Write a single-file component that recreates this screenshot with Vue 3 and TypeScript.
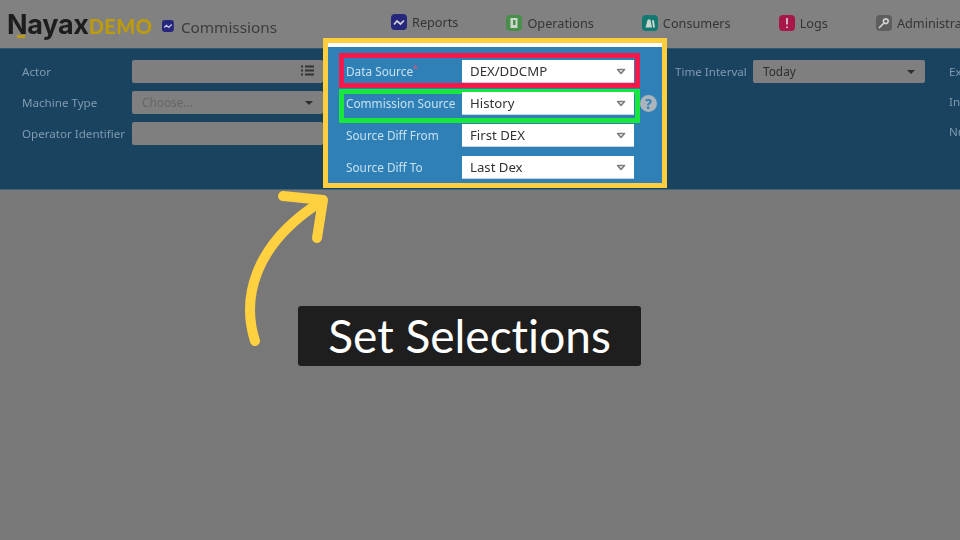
<script setup lang="ts">
interface NavItem {
  label: string;
  color: string;
  glyph: string;
  solid?: boolean;
  raised?: boolean;
}

const navItems: NavItem[] = [
  { label: 'Reports', color: '#26267c', glyph: 'M3 10.5 L6 7 L9.5 10 L13 6.5', raised: true },
  { label: 'Operations', color: '#478f4b', glyph: 'M4.5 3 H11.5 V13 H4.5 Z M7 5 V10 H9.5 V5 Z', solid: true },
  { label: 'Consumers', color: '#127a70', glyph: 'M3.5 12.5 L5.5 5 Q7 3.5 8.5 5 L10 12.5 Z M10 5.5 Q11.5 4.5 12 6 L13 12.5 H11 Z', solid: true },
  { label: 'Logs', color: '#a8174a', glyph: 'M8 3 V9.5 M8 11.5 V13' },
  { label: 'Administration', color: '#5e5e5e', glyph: 'M3 13 L8 8 M9.8 3.8 A2.4 2.4 0 1 1 9.79 3.8' },
];

const panelRows = [
  { label: 'Data Source', value: 'DEX/DDCMP', frame: 'red', required: true },
  { label: 'Commission Source', value: 'History', frame: 'green', help: true },
  { label: 'Source Diff From', value: 'First DEX' },
  { label: 'Source Diff To', value: 'Last Dex' },
];
</script>

<template>
  <div class="page">
    <div class="dimmed">
      <header class="header">
        <div class="logo">
          <span class="logo__name">Nayax</span>
          <span class="logo__mark"></span>
          <span class="logo__demo">DEMO</span>
        </div>
        <div class="title">
          <svg class="title__icon" viewBox="0 0 16 16">
            <rect width="16" height="16" rx="4" fill="#26267c" />
            <path d="M3 10 L6 7 L9 10 L13 6" fill="none" stroke="#c9c9e0" stroke-width="1.6" />
          </svg>
          <span>Commissions</span>
        </div>
        <nav class="nav">
          <div v-for="item in navItems" :key="item.label" class="nav__item" :class="{ 'nav__item--raised': item.raised }">
            <svg class="nav__icon" viewBox="0 0 16 16">
              <rect width="16" height="16" rx="4" :fill="item.color" />
              <path
                v-if="item.solid"
                :d="item.glyph"
                fill="#cfd6cf"
                fill-rule="evenodd"
              />
              <path v-else :d="item.glyph" fill="none" stroke="#d3d3d3" stroke-width="1.7" />
            </svg>
            <span>{{ item.label }}</span>
          </div>
        </nav>
      </header>

      <section class="filters">
        <div class="filters__col">
          <div class="field">
            <label class="field__label">Actor</label>
            <div class="input">
              <svg class="input__list" viewBox="0 0 13 11">
                <path d="M0 1.5 H2 M4 1.5 H13 M0 5.5 H2 M4 5.5 H13 M0 9.5 H2 M4 9.5 H13" stroke="#333" stroke-width="1.8" />
              </svg>
            </div>
          </div>
          <div class="field">
            <label class="field__label">Machine Type</label>
            <div class="input input--muted">
              <span>Choose...</span>
              <span class="caret"></span>
            </div>
          </div>
          <div class="field">
            <label class="field__label">Operator Identifier</label>
            <div class="input"></div>
          </div>
        </div>
        <div class="filters__col filters__col--time">
          <div class="field">
            <label class="field__label field__label--time">Time Interval</label>
            <div class="input input--time">
              <span>Today</span>
              <span class="caret"></span>
            </div>
          </div>
        </div>
        <div class="filters__col filters__col--cut">
          <label class="field__label">Exclude</label>
          <label class="field__label">Include</label>
          <label class="field__label">Number</label>
        </div>
      </section>

      <main class="empty"></main>
    </div>

    <!-- highlighted part of the form, lies over the dimmed page -->
    <div class="panel">
      <div class="panel__strip"></div>
      <div class="panel__rows">
        <div v-for="row in panelRows" :key="row.label" class="row">
          <span v-if="row.frame" class="row__frame" :class="'row__frame--' + row.frame"></span>
          <label class="row__label">{{ row.label }}<span v-if="row.required" class="row__req">*</span></label>
          <div class="row__select">
            <span>{{ row.value }}</span>
            <svg class="row__arrow" viewBox="0 0 10 7">
              <path d="M1.5 1.5 H8.5 L5 5.5 Z" fill="#f2f2f2" stroke="#7f7f7f" stroke-width="1.6" stroke-linejoin="round" />
            </svg>
          </div>
          <span v-if="row.help" class="row__help">?</span>
        </div>
      </div>
    </div>

    <svg class="arrow" viewBox="0 0 960 540">
      <path d="M255 341 C242 300 252 245 322 201" />
      <path d="M283 196 L323 200 L317 238" />
    </svg>

    <div class="caption">Set Selections</div>
  </div>
</template>

<style>
html,
body {
  margin: 0;
  background: #787878;
}
</style>

<style scoped>
.page {
  position: relative;
  width: 960px;
  height: 540px;
  overflow: hidden;
  font-family: 'Noto Sans', sans-serif;
  font-size: 11.8px;
  background: #787878;
}

.dimmed {
  display: flex;
  flex-direction: column;
  height: 100%;
  filter: blur(0.5px);
}

.header {
  display: flex;
  align-items: center;
  flex-shrink: 0;
  height: 48px;
  background: #818181;
  color: #353535;
}

.logo {
  position: relative;
  display: flex;
  align-items: baseline;
  margin-left: 7px;
  width: 155px;
  flex-shrink: 0;
}

.logo__name {
  font-family: Inter, sans-serif;
  font-weight: 700;
  font-size: 27px;
  letter-spacing: -0.3px;
  color: #1d1d1d;
}

.logo__mark {
  position: absolute;
  left: 10px;
  top: 27px;
  width: 8px;
  height: 3px;
  background: #bd9b0e;
}

.logo__demo {
  font-family: Lato, sans-serif;
  font-weight: 900;
  font-size: 20px;
  letter-spacing: 0.5px;
  color: #bd9b0e;
}

.title {
  display: flex;
  align-items: center;
  gap: 7px;
  margin-top: 5px;
  font-size: 15.3px;
  flex-shrink: 0;
  color: #3c3c3c;
  width: 115px;
}

.title__icon {
  width: 12px;
  height: 12px;
  margin-top: -1px;
}

.nav {
  display: flex;
  align-items: flex-start;
  gap: 48px;
  margin-top: -2px;
  margin-left: 114px;
  flex-shrink: 0;
}

.nav__item {
  display: flex;
  align-items: center;
  gap: 5px;
  font-size: 12.7px;
}

.nav__item--raised {
  margin-top: -1px;
}

.nav__icon {
  width: 16px;
  height: 16px;
}

.filters {
  display: flex;
  flex-shrink: 0;
  height: 142px;
  box-sizing: border-box;
  padding: 11px 0 0 22px;
  background: #1a4360;
  border-top: 1px solid #2c5873;
  border-bottom: 1px solid #476678;
  white-space: nowrap;
  font-size: 11.6px;
}

.filters__col {
  display: flex;
  flex-direction: column;
  gap: 8px;
  width: 301px;
  flex-shrink: 0;
}

.filters__col--time {
  width: 274px;
  margin-left: 352px;
}

.filters__col--cut {
  gap: 13px;
  padding-top: 3px;
}

.field {
  display: flex;
  align-items: center;
}

.field__label {
  display: block;
  width: 110px;
  line-height: 17px;
  color: #7f9bb0;
  flex-shrink: 0;
}

.field__label--time {
  width: 78px;
}

.input {
  display: flex;
  align-items: center;
  justify-content: space-between;
  box-sizing: border-box;
  width: 191px;
  height: 23px;
  padding: 0 10px 2px;
  background: #7f7f7f;
  border-radius: 2px;
  color: #2e2e2e;
  font-size: 11.8px;
}

.input--muted {
  color: #666;
}

.input--time {
  width: 172px;
}

.input__list {
  width: 13px;
  height: 11px;
  margin-left: auto;
  margin-right: -1px;
}

.caret {
  width: 0;
  height: 0;
  margin-top: 2px;
  border-left: 4.5px solid transparent;
  border-right: 4.5px solid transparent;
  border-top: 4px solid #2e2e2e;
}

.empty {
  flex: 1;
  background: #787878;
}

.panel {
  position: absolute;
  left: 323px;
  top: 38px;
  box-sizing: border-box;
  width: 344px;
  height: 150px;
  border: 5px solid #ffce3f;
  background: #3080b8;
}

.panel__strip {
  height: 4px;
  background: #fff;
}

.panel__rows {
  display: flex;
  flex-direction: column;
  gap: 9px;
  padding: 13px 0 0 16px;
  width: 291px;
  filter: blur(0.3px);
}

.row {
  position: relative;
  display: flex;
  align-items: center;
  height: 23px;
  padding-left: 2px;
}

.row__frame {
  position: absolute;
  left: -5px;
  right: -5px;
  box-sizing: border-box;
  border: 5px solid;
}

.row__frame--red {
  top: -7px;
  bottom: -5px;
  border-color: #f5184a;
}

.row__frame--green {
  top: -3px;
  bottom: -8px;
  border-color: #19e63c;
}

.row__label {
  position: relative;
  display: flex;
  width: 116px;
  margin-top: -1px;
  flex-shrink: 0;
  color: #c6e0f0;
  white-space: nowrap;
}

.row__req {
  color: #e8506e;
  font-size: 9px;
  line-height: 12px;
}

.row__select {
  position: relative;
  display: flex;
  align-items: center;
  justify-content: space-between;
  box-sizing: border-box;
  width: 172px;
  height: 23px;
  padding: 0 8px;
  background: #fff;
  border-bottom: 1px solid #c9d6e0;
  color: #333;
  font-size: 13.2px;
}

.row__arrow {
  width: 10px;
  height: 7px;
}

.row__help {
  position: absolute;
  left: 296px;
  top: 3px;
  width: 17px;
  height: 17px;
  border-radius: 50%;
  background: #a9b4bb;
  color: #3080b8;
  font-size: 14px;
  font-weight: 700;
  line-height: 17px;
  text-align: center;
}

.arrow {
  position: absolute;
  inset: 0;
  width: 960px;
  height: 540px;
  fill: none;
  stroke: #ffd040;
  stroke-width: 10;
  stroke-linecap: round;
  stroke-linejoin: round;
}

.caption {
  position: absolute;
  left: 298px;
  top: 306px;
  width: 343px;
  height: 60px;
  border-radius: 3px;
  background: #1e1e1e;
  color: #fff;
  font-family: Lato, sans-serif;
  font-size: 46px;
  font-variant-ligatures: none;
  line-height: 60px;
  text-align: center;
}
</style>
